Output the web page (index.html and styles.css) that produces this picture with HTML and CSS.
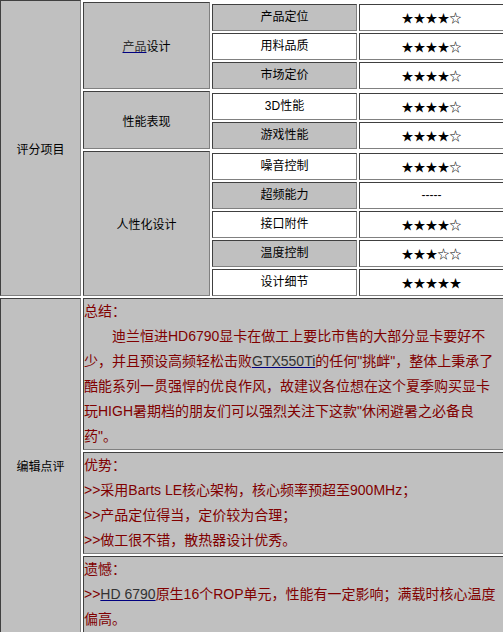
FILE: index.html
```html
<!DOCTYPE html>
<html lang="zh-CN">
<head>
    <meta charset="UTF-8">
    <meta name="viewport" content="width=device-width, initial-scale=1.0">
    <title>评分项目 / 编辑点评</title>
    <link rel="stylesheet" href="styles.css">
</head>
<body>
    <div class="sheet">
        <!-- 评分项目 -->
        <div class="block">
            <div class="cell head">评分项目</div>
            <div class="groups">
                <div class="group">
                    <div class="cell group-name"><a href="#" class="link">产品</a>设计</div>
                    <div class="items">
                        <div class="item"><div class="cell item-name shade">产品定位</div><div class="cell stars">★★★★☆</div></div>
                        <div class="item"><div class="cell item-name">用料品质</div><div class="cell stars">★★★★☆</div></div>
                        <div class="item"><div class="cell item-name shade">市场定价</div><div class="cell stars">★★★★☆</div></div>
                    </div>
                </div>
                <div class="group">
                    <div class="cell group-name">性能表现</div>
                    <div class="items">
                        <div class="item"><div class="cell item-name">3D性能</div><div class="cell stars">★★★★☆</div></div>
                        <div class="item"><div class="cell item-name shade">游戏性能</div><div class="cell stars">★★★★☆</div></div>
                    </div>
                </div>
                <div class="group">
                    <div class="cell group-name">人性化设计</div>
                    <div class="items">
                        <div class="item"><div class="cell item-name">噪音控制</div><div class="cell stars">★★★★☆</div></div>
                        <div class="item"><div class="cell item-name shade">超频能力</div><div class="cell stars dash">-----</div></div>
                        <div class="item"><div class="cell item-name">接口附件</div><div class="cell stars">★★★★☆</div></div>
                        <div class="item"><div class="cell item-name shade">温度控制</div><div class="cell stars">★★★☆☆</div></div>
                        <div class="item"><div class="cell item-name">设计细节</div><div class="cell stars">★★★★★</div></div>
                    </div>
                </div>
            </div>
        </div>

        <!-- 编辑点评 -->
        <div class="block comments">
            <div class="cell head">编辑点评</div>
            <div class="notes">
                <div class="cell note">
                    <p>总结：</p>
                    <p>　　迪兰恒进HD6790显卡在做工上要比市售的大部分显卡要好不少，并且预设高频轻松击败<a href="#" class="link">GTX550Ti</a>的任何"挑衅"，整体上秉承了酷能系列一贯强悍的优良作风，故建议各位想在这个夏季购买显卡玩HIGH暑期档的朋友们可以强烈关注下这款"休闲避暑之必备良药"。</p>
                </div>
                <div class="cell note">
                    <p>优势：</p>
                    <p>&gt;&gt;采用Barts LE核心架构，核心频率预超至900MHz；</p>
                    <p>&gt;&gt;产品定位得当，定价较为合理；</p>
                    <p>&gt;&gt;做工很不错，散热器设计优秀。</p>
                </div>
                <div class="cell note">
                    <p>遗憾：</p>
                    <p>&gt;&gt;<a href="#" class="link">HD 6790</a>原生16个ROP单元，性能有一定影响；满载时核心温度偏高。</p>
                </div>
            </div>
        </div>
    </div>
</body>
</html>
```

FILE: styles.css
```css
html, body {
    margin: 0;
    overflow: hidden;
    background-color: #fff;
}
body {
    font-family: "Liberation Sans", "Noto Sans CJK SC", sans-serif;
    font-size: 12px;
    color: #000;
}
.sheet {
    width: 504px;
}
.block {
    display: grid;
    grid-template-columns: 81px 1fr;
    column-gap: 2px;
}
.comments {
    margin-top: 2px;
}
/* 表格单元格的立体边框 */
.cell {
    box-sizing: border-box;
    border: 1px solid;
    border-color: #404040 #808080 #808080 #404040;
    background-color: #fff;
}
.head, .group-name, .shade, .note {
    background-color: #c0c0c0;
}
.head, .group-name {
    display: flex;
    align-items: center;
    justify-content: center;
}
.groups {
    display: flex;
    flex-direction: column;
    gap: 2px;
    padding-top: 2px;
}
.group {
    display: grid;
    grid-template-columns: 127px 1fr;
    column-gap: 2px;
}
.items {
    display: flex;
    flex-direction: column;
    gap: 2px;
    padding-top: 2px;
}
.item {
    display: grid;
    grid-template-columns: 145px 145px;
    column-gap: 2px;
}
.item-name, .stars {
    height: 27px;
    line-height: 25px;
    text-align: center;
}
.stars {
    font-family: "Noto Sans CJK SC", "DejaVu Sans", sans-serif;
}
.dash {
    font-family: "Liberation Sans", sans-serif;
}
.link {
    color: #333;
    text-decoration: underline;
    text-decoration-color: #000080;
}
.notes {
    display: flex;
    flex-direction: column;
    gap: 2px;
}
.note {
    color: #800000;
    font-size: 14px;
    line-height: 25px;
}
.note p {
    margin: 0;
}
```
